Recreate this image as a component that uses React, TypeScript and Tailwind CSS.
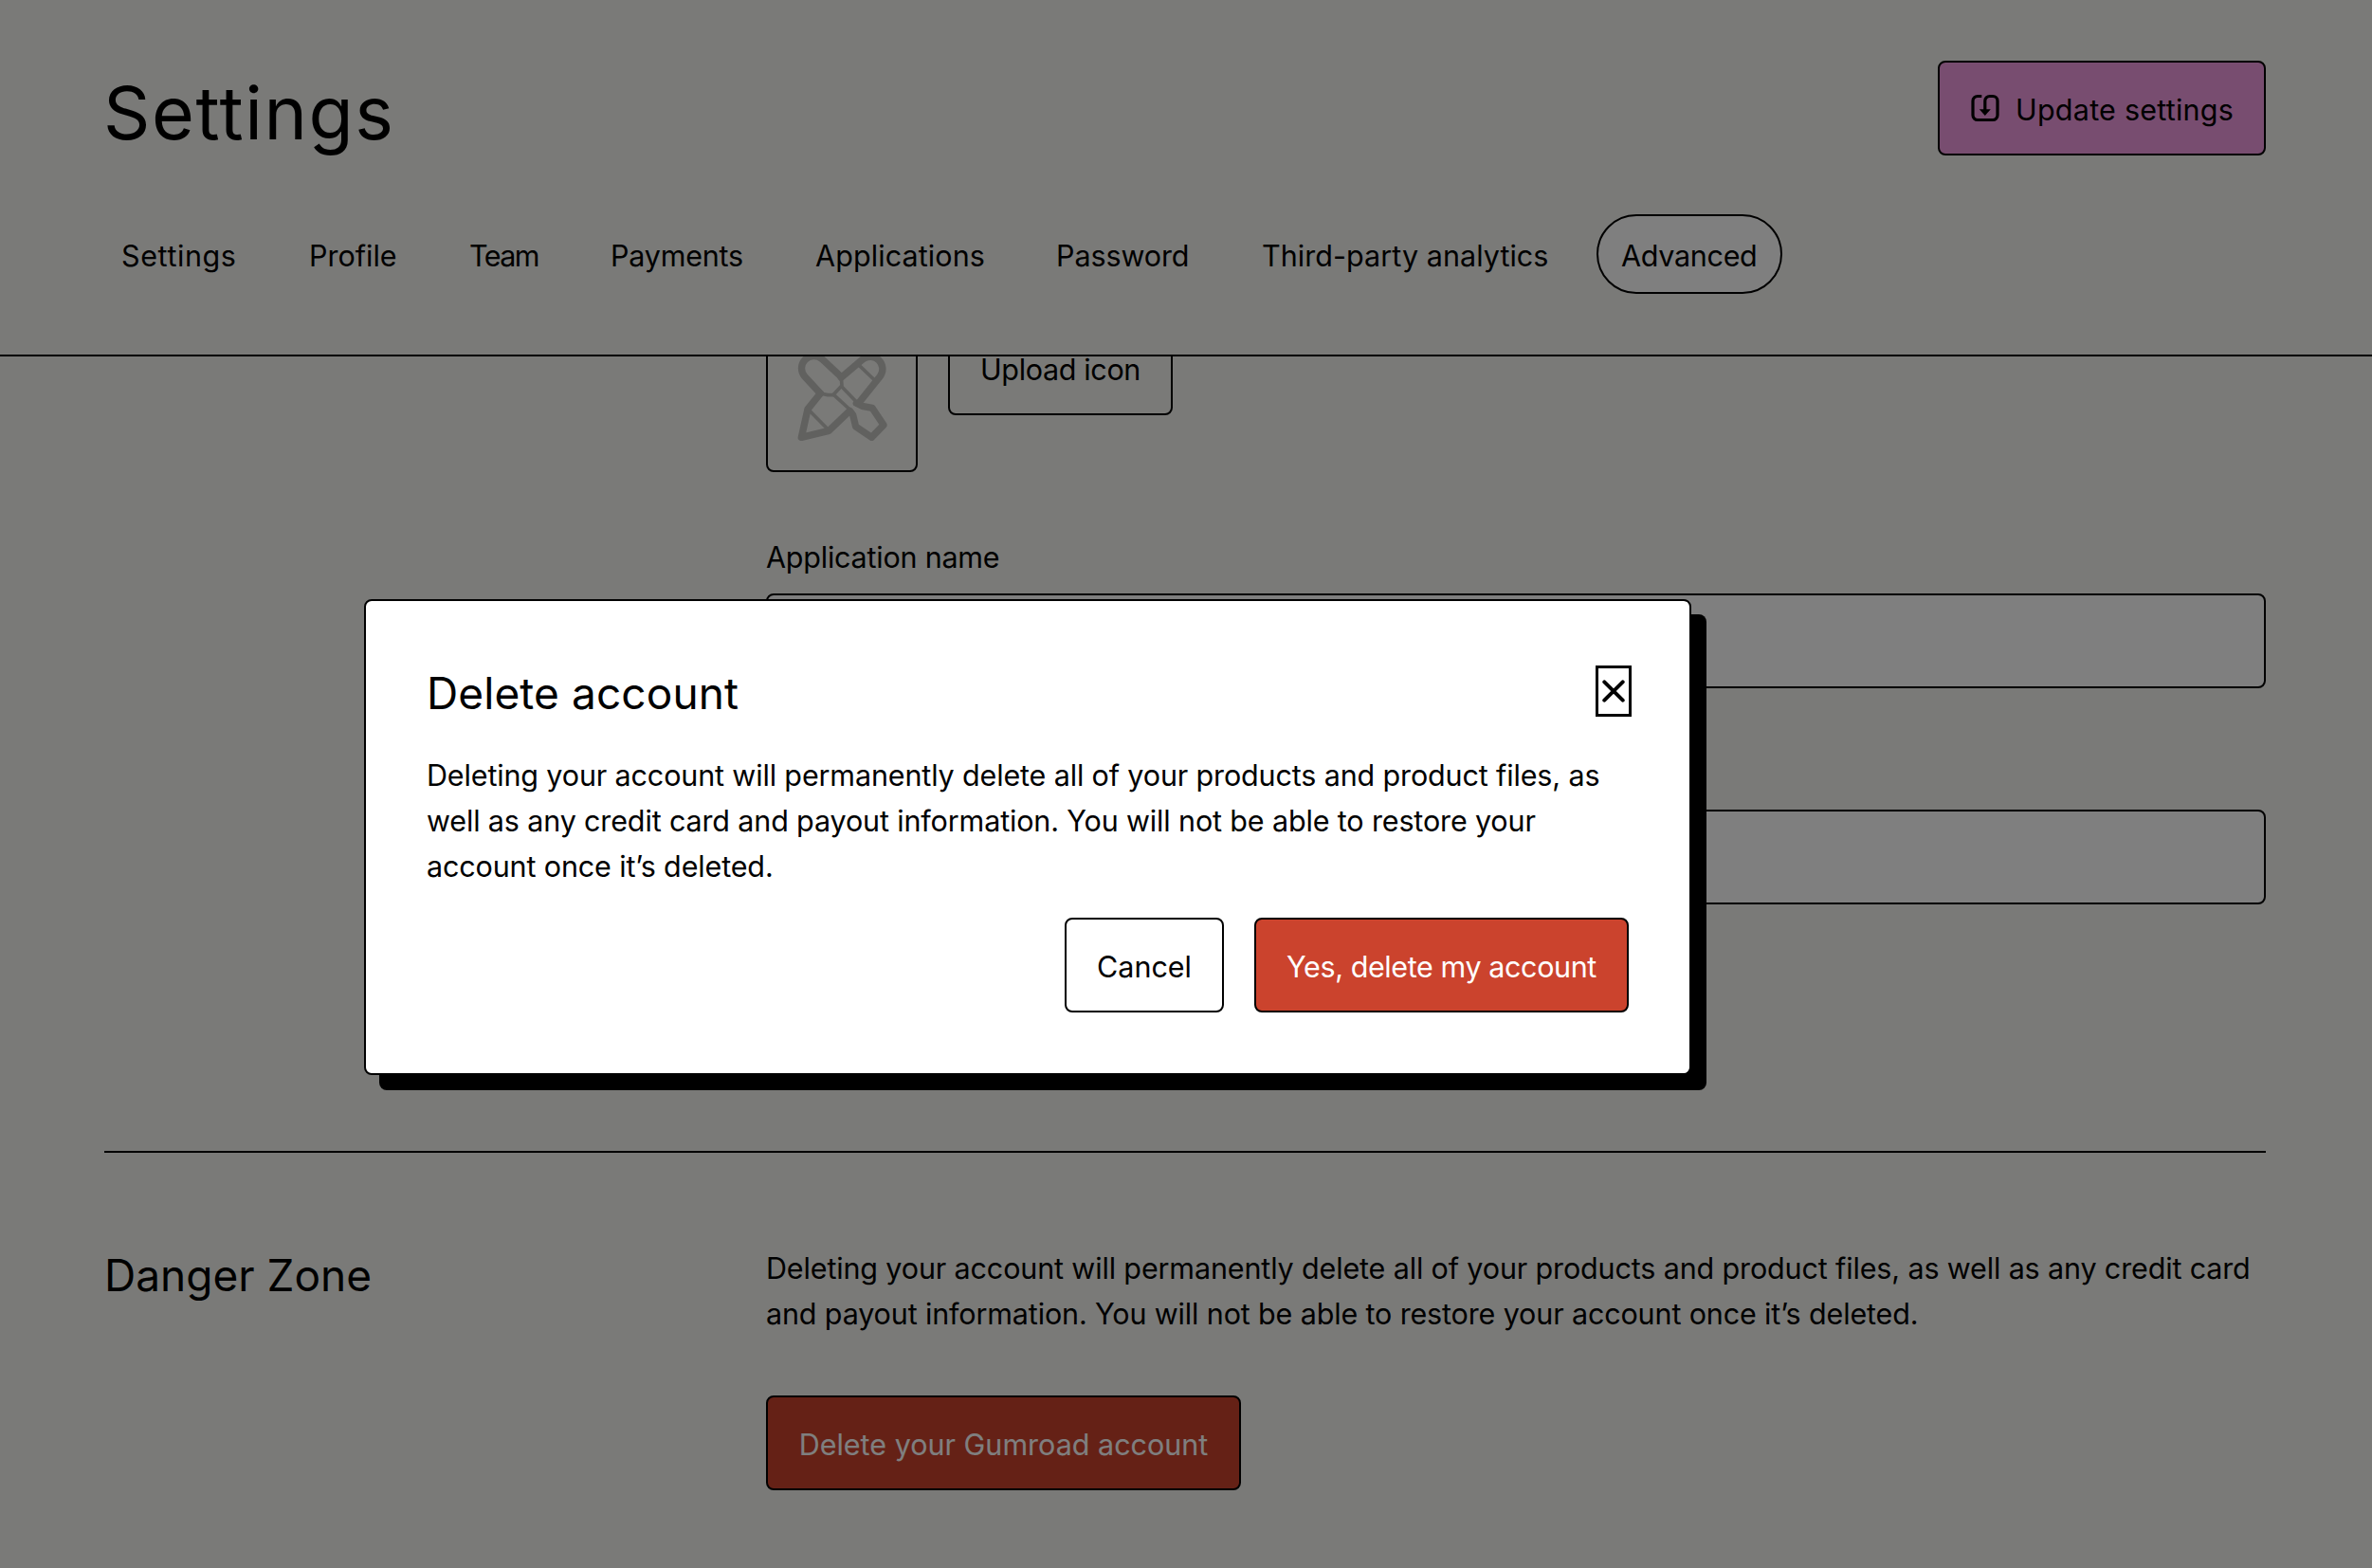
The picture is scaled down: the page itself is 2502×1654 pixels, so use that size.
import React from "react";

const tabs = [
  { label: "Settings", className: "w-[174px] tracking-[0.6px]" },
  { label: "Profile", className: "w-[145px] tracking-normal" },
  { label: "Team", className: "w-[125px] tracking-[-1.6px]" },
  { label: "Payments", className: "w-[192px] tracking-[-0.2px]" },
  { label: "Applications", className: "w-[230px] tracking-[0.1px]" },
  { label: "Password", className: "w-[193px] tracking-[-0.1px]" },
  { label: "Third-party analytics", className: "w-[355px] tracking-[0.05px]" },
  { label: "Advanced", className: "w-[196px] tracking-[-0.3px]", active: true },
];

function SaveIcon() {
  return (
    <svg viewBox="0 0 32 32" className="size-8 shrink-0" fill="none">
      <path
        d="M12.3 3.5H8A5 5 0 0 0 3 8.5V23.5A5 5 0 0 0 8 28.5H24A5 5 0 0 0 29 23.5V8.5A5 5 0 0 0 24 3.5H20.8A5 5 0 0 0 15.8 8.5V19"
        stroke="currentColor"
        strokeWidth="3.2"
      />
      <path d="M9.8 17.3H21.8L15.8 24Z" fill="currentColor" />
    </svg>
  );
}

function ToolsIcon() {
  return (
    <svg viewBox="0 0 156 156" className="size-[156px]" fill="none">
      <g
        transform="translate(10 30) scale(0.3333)"
        stroke="#000"
        opacity="0.2"
        strokeLinejoin="round"
        strokeLinecap="round"
      >
        <g strokeWidth="22">
          <path d="M202 83L141 26A39 39 0 0 0 86 81L136 135" />
          <path d="M202 85L271 26A39 39 0 0 1 325 81L262 160" />
          <path d="M136 135L96 185L76 274L163 253L228 191" />
          <path d="M250 166L268 175L300 181L336 235L298 274L248 240L239 203L230 191" />
        </g>
        <g strokeWidth="11">
          <path d="M202 83L204 110L176 140H160L136 135" />
          <path d="M204 114L256 168" />
          <path d="M178 139L236 192" />
          <path d="M250 38L314 99" />
          <path d="M101 189L158 247" />
        </g>
      </g>
    </svg>
  );
}

function Header() {
  return (
    <header className="h-[376px] border-b-2 border-black pt-16 pr-28 pl-[110px]">
      <div className="flex h-[100px] items-start justify-between">
        <h1 className="-ml-px text-[77px] leading-[110px] tracking-[1.6px]">Settings</h1>
        <button className="flex h-[100px] w-[346px] items-center gap-4 rounded-lg border-2 border-black bg-[#f19ae0] px-8">
          <SaveIcon />
          <span className="pt-1 tracking-[0.24px] whitespace-nowrap">Update settings</span>
        </button>
      </div>
      <nav className="-ml-2 flex gap-6 pt-[62px]">
        {tabs.map((tab) => (
          <a
            key={tab.label}
            className={`${tab.className} h-[84px] rounded-[42px] border-2 px-6 pt-[18px] whitespace-nowrap ${
              tab.active ? "border-black bg-white" : "border-transparent"
            }`}
          >
            {tab.label}
          </a>
        ))}
      </nav>
    </header>
  );
}

function Main() {
  return (
    <main className="h-[1278px] overflow-hidden pr-28 pl-[110px]">
      <section className="-mt-[38px] flex h-[876px] flex-col pl-[698px]">
        <div className="flex items-start gap-8">
          <div className="size-40 rounded-lg border-2 border-black">
            <ToolsIcon />
          </div>
          <button className="h-[100px] w-[237px] rounded-lg border-2 border-black pt-1 tracking-[-0.35px] whitespace-nowrap">
            Upload icon
          </button>
        </div>
        <label className="mt-[66px] tracking-[-0.22px]">Application name</label>
        <input className="mt-3.5 h-[100px] shrink-0 rounded-lg border-2 border-black bg-white px-8" />
        <input className="mt-32 h-[100px] shrink-0 rounded-lg border-2 border-black bg-white px-8" />
      </section>
      <section className="flex border-t-2 border-black pt-[98px]">
        <h2 className="w-[698px] shrink-0 pt-[3px] text-[46px] leading-[56px] tracking-normal">
          Danger Zone
        </h2>
        <div>
          <p className="tracking-[-0.14px]">
            Deleting your account will permanently delete all of your products and product files,
            as well as any credit card and payout information. You will not be able to restore
            your account once it’s deleted.
          </p>
          <button className="mt-[62px] h-[100px] w-[501px] rounded-lg border-2 border-black bg-[#cb432d] pt-1 whitespace-nowrap text-white">
            Delete your Gumroad account
          </button>
        </div>
      </section>
    </main>
  );
}

function DeleteDialog() {
  return (
    <div className="absolute inset-0 bg-black/50 pt-[632px] pl-96">
      <div className="flex h-[502px] w-[1400px] flex-col rounded-lg border-2 border-black bg-white px-16 pt-16 shadow-[16px_16px_0_#000]">
        <div className="flex h-24 items-start justify-between pt-[5px]">
          <h2 className="text-[46px] leading-[56px] tracking-[0.1px]">Delete account</h2>
          <button className="-mt-px -mr-[3px] flex h-[54px] w-[38px] items-center justify-center border-[3px] border-black">
            <svg viewBox="0 0 24 24" className="size-6 shrink-0" fill="none">
              <path
                d="M2.3 2.3L21.7 21.7M21.7 2.3L2.3 21.7"
                stroke="#000"
                strokeWidth="4"
                strokeLinecap="round"
              />
            </svg>
          </button>
        </div>
        <p className="tracking-[-0.14px]">
          Deleting your account will permanently delete all of your products and product files, as
          well as any credit card and payout information. You will not be able to restore your
          account once it’s deleted.
        </p>
        <div className="mt-[30px] flex justify-end gap-8">
          <button className="h-[100px] w-[168px] rounded-lg border-2 border-black bg-white pt-1">
            Cancel
          </button>
          <button className="h-[100px] w-[395px] rounded-lg border-2 border-black bg-[#cb432d] pt-1 tracking-[-0.4px] whitespace-nowrap text-white">
            Yes, delete my account
          </button>
        </div>
      </div>
    </div>
  );
}

export default function App() {
  return (
    <div className="relative h-[1654px] w-[2502px] overflow-hidden bg-[#f4f4f0] font-['Inter',sans-serif] text-[30.5px] leading-[48px] text-black">
      <Header />
      <Main />
      <DeleteDialog />
    </div>
  );
}
